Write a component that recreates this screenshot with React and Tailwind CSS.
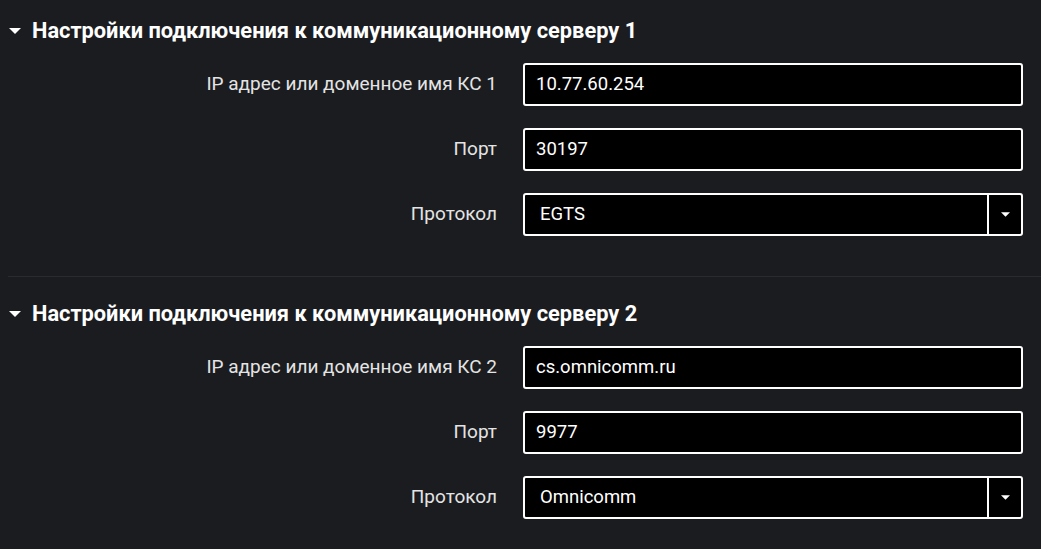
import React from 'react';

const sections = [
    {
        title: 'Настройки подключения к коммуникационному серверу 1',
        ipLabel: 'IP адрес или доменное имя КС 1',
        ip: '10.77.60.254',
        port: '30197',
        protocol: 'EGTS',
    },
    {
        title: 'Настройки подключения к коммуникационному серверу 2',
        ipLabel: 'IP адрес или доменное имя КС 2',
        ip: 'cs.omnicomm.ru',
        port: '9977',
        protocol: 'Omnicomm',
    },
];

function Caret({ className }) {
    return (
        <svg viewBox="0 0 10 5" className={className} fill="currentColor">
            <path d="M0 0 L10 0 L5 5 Z" />
        </svg>
    );
}

function Row({ label, children }) {
    return (
        <div className="flex items-center">
            <div className="w-[497px] text-right text-[19px] text-[#e4e4e4]">{label}</div>
            <div className="ml-[26px] w-[500px]">{children}</div>
        </div>
    );
}

function TextField({ value }) {
    return (
        <div className="h-[43px] flex items-center px-[11px] bg-black border-2 border-white rounded-[3px] text-[18.5px] text-white">
            {value}
        </div>
    );
}

function SelectField({ value }) {
    return (
        <div className="h-[43px] flex bg-black border-2 border-white rounded-[3px] text-[18.5px] text-white">
            <div className="flex-1 flex items-center pl-[15px]">{value}</div>
            <div className="w-[34px] border-l-2 border-white flex items-center justify-center">
                <Caret className="w-[9px] h-[5px] text-white" />
            </div>
        </div>
    );
}

function Section({ s }) {
    return (
        <div>
            <div className="h-6 flex items-center text-white font-bold text-[21.8px]">
                <Caret className="ml-[9px] w-[12px] h-[6px] text-white" />
                <span className="ml-[11px]">{s.title}</span>
            </div>
            <div className="mt-5 flex flex-col gap-[22px]">
                <Row label={s.ipLabel}><TextField value={s.ip} /></Row>
                <Row label="Порт"><TextField value={s.port} /></Row>
                <Row label="Протокол"><SelectField value={s.protocol} /></Row>
            </div>
        </div>
    );
}

export default function App() {
    return (
        <div
            className="w-[1041px] h-[549px] overflow-hidden bg-[#1b1c20] pt-[19px]"
            style={{ fontFamily: 'Roboto, "Noto Sans", sans-serif' }}
        >
            <Section s={sections[0]} />
            <div className="ml-2 mt-10 h-px bg-[#2a2b2f]" />
            <div className="mt-[25px]">
                <Section s={sections[1]} />
            </div>
        </div>
    );
}
